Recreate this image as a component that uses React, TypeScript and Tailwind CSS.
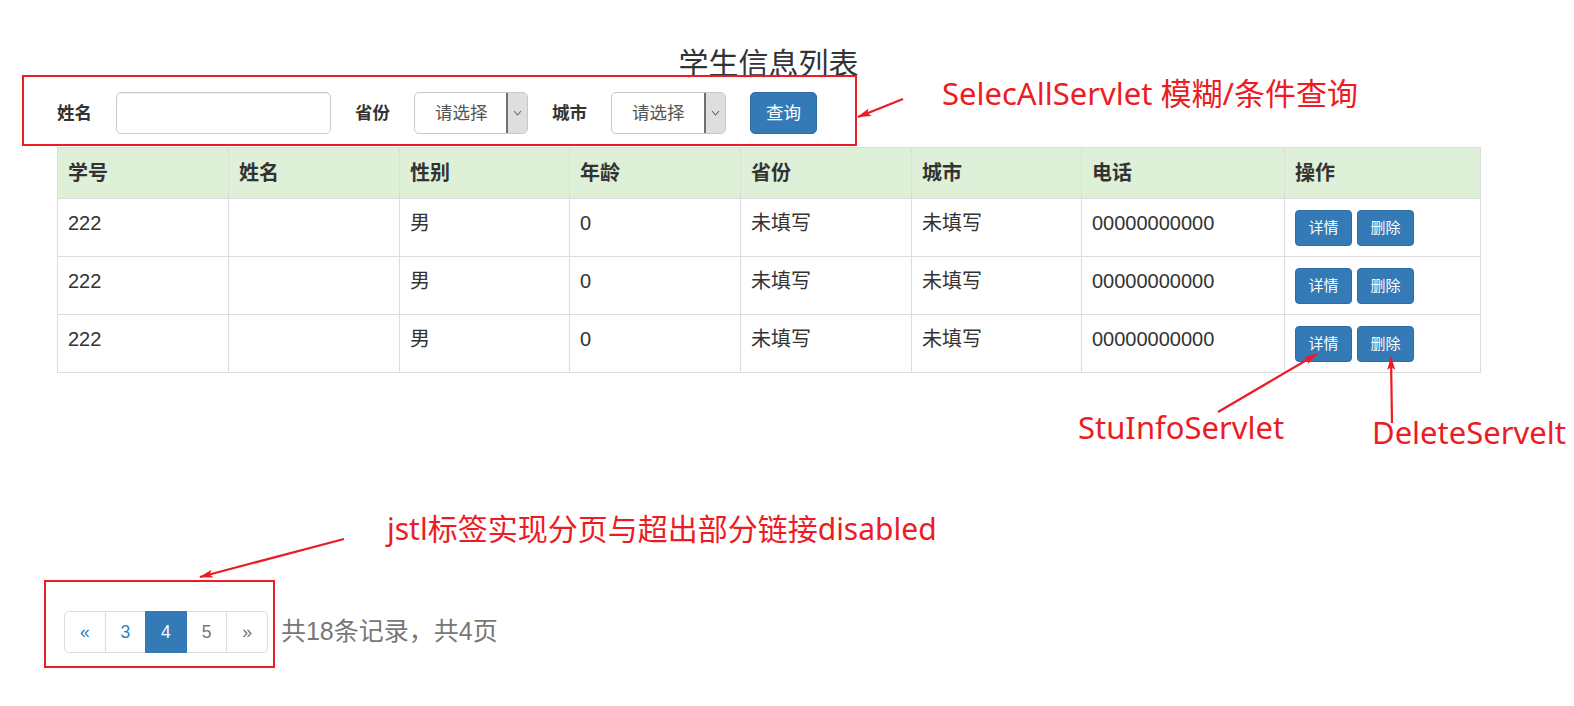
import React from "react";

const headers = ["学号", "姓名", "性别", "年龄", "省份", "城市", "电话", "操作"];
const colWidths = [171, 171, 170, 171, 171, 170, 203, 196];

const rows = [
  { id: "222", name: "", sex: "男", age: "0", province: "未填写", city: "未填写", phone: "00000000000" },
  { id: "222", name: "", sex: "男", age: "0", province: "未填写", city: "未填写", phone: "00000000000" },
  { id: "222", name: "", sex: "男", age: "0", province: "未填写", city: "未填写", phone: "00000000000" },
];

function FakeSelect({ width }: { width: string }) {
  return (
    <div className={`flex h-[42px] ${width} overflow-hidden rounded-[5px] border border-[#c8c8c8] bg-white`}>
      <div className="flex flex-1 items-center pl-[20px] text-[17.5px] text-[#555]">请选择</div>
      <div className="flex w-[21px] items-center justify-center border-l-2 border-[#707070] bg-[#dedede]">
        <svg width="9" height="6" viewBox="0 0 9 6">
          <polyline points="1,1 4.5,5 8,1" fill="none" stroke="#666" strokeWidth="1.1" />
        </svg>
      </div>
    </div>
  );
}

function Pagination() {
  const items = [
    { label: "«", kind: "link" },
    { label: "3", kind: "link" },
    { label: "4", kind: "active" },
    { label: "5", kind: "disabled" },
    { label: "»", kind: "disabled" },
  ];
  return (
    <ul className="flex">
      {items.map((it, i) => (
        <li
          key={i}
          className={
            "flex h-[42px] w-[41.6px] items-center justify-center border text-[17.5px] " +
            (i > 0 ? "-ml-px " : "") +
            (i === 0 ? "rounded-l-[5px] " : "") +
            (i === items.length - 1 ? "rounded-r-[5px] " : "") +
            (it.kind === "active"
              ? "relative z-10 border-[#337ab7] bg-[#337ab7] text-white"
              : it.kind === "disabled"
              ? "border-[#ddd] bg-white text-[#777]"
              : "border-[#ddd] bg-white text-[#337ab7]")
          }
        >
          {it.label}
        </li>
      ))}
    </ul>
  );
}

export default function App() {
  const red = "#ec1c24";
  return (
    <div
      className="relative h-[706px] w-full overflow-hidden bg-white text-[#333]"
      style={{ fontFamily: '"Liberation Sans", "Noto Sans CJK SC", sans-serif' }}
    >
      <div className="ml-[57px] w-[1423px] pt-[47px]">
        <h3 className="text-center text-[30px] font-normal leading-[33px] text-[#333]">学生信息列表</h3>

        {/* search form */}
        <div className="mt-[12px] flex h-[42px] items-center gap-[24px]">
          <label className="text-[17.5px] font-bold">姓名</label>
          <input
            className="h-[42px] w-[215px] rounded-[5px] border border-[#ccc] px-3 shadow-[inset_0_1px_1px_rgba(0,0,0,0.075)] outline-none"
            type="text"
          />
          <label className="text-[17.5px] font-bold">省份</label>
          <FakeSelect width="w-[114px]" />
          <label className="text-[17.5px] font-bold">城市</label>
          <FakeSelect width="w-[115px]" />
          <button className="h-[42px] w-[67px] rounded-[5px] border border-[#2e6da4] bg-[#337ab7] text-[17.5px] text-white">
            查询
          </button>
        </div>

        {/* table */}
        <table className="mt-[13px] w-[1423px] table-fixed border-collapse border border-[#ddd] text-[20px]">
          <colgroup>
            {colWidths.map((w, i) => (
              <col key={i} style={{ width: w }} />
            ))}
          </colgroup>
          <thead>
            <tr className="bg-[#dff0d8]">
              {headers.map((h) => (
                <th key={h} className="border border-[#ddd] px-[10px] py-[10px] text-left font-bold leading-[30px]">
                  {h}
                </th>
              ))}
            </tr>
          </thead>
          <tbody>
            {rows.map((r, i) => (
              <tr key={i}>
                {[r.id, r.name, r.sex, r.age, r.province, r.city, r.phone].map((v, j) => (
                  <td key={j} className="border border-[#ddd] px-[10px] pt-[9px] align-top leading-[30px]">
                    {v}
                  </td>
                ))}
                <td className="border border-[#ddd] px-[10px] pb-[10px] pt-[11px] align-top">
                  <div className="flex gap-[5px]">
                    <button className="h-[36px] w-[57px] rounded-[4px] border border-[#2e6da4] bg-[#337ab7] text-[15px] text-white">
                      详情
                    </button>
                    <button className="h-[36px] w-[57px] rounded-[4px] border border-[#2e6da4] bg-[#337ab7] text-[15px] text-white">
                      删除
                    </button>
                  </div>
                </td>
              </tr>
            ))}
          </tbody>
        </table>

        {/* pagination */}
        <div className="ml-[7px] mt-[238px] flex items-center gap-[13px]">
          <Pagination />
          <span className="text-[25px] text-[#777]">共18条记录，共4页</span>
        </div>
      </div>

      {/* annotations */}
      <div className="pointer-events-none absolute left-[22px] top-[75px] h-[71px] w-[835px] border-2 border-[#ec1c24]" />
      <div className="pointer-events-none absolute left-[44px] top-[580px] h-[88px] w-[231px] border-2 border-[#ec1c24]" />

      <svg className="pointer-events-none absolute left-0 top-0" width="1574" height="706">
        <defs>
          <marker id="ah" markerWidth="14" markerHeight="8" refX="13" refY="4" orient="auto" markerUnits="userSpaceOnUse">
            <path d="M0,0 L14,4 L0,8 L3,4 z" fill={red} />
          </marker>
        </defs>
        <line x1="903" y1="99" x2="858" y2="117" stroke={red} strokeWidth="2.2" markerEnd="url(#ah)" />
        <line x1="1218" y1="412" x2="1317" y2="354" stroke={red} strokeWidth="2.2" markerEnd="url(#ah)" />
        <line x1="1392" y1="423" x2="1391" y2="357" stroke={red} strokeWidth="2.2" markerEnd="url(#ah)" />
        <line x1="344" y1="539" x2="200" y2="577" stroke={red} strokeWidth="2.2" markerEnd="url(#ah)" />
      </svg>

      <div
        className="pointer-events-none absolute left-0 top-0 text-[#ec1c24]"
        style={{ fontFamily: '"Noto Sans", "Noto Sans CJK SC", sans-serif' }}
      >
        <span className="absolute left-[942px] top-[78px] whitespace-nowrap text-[31px] leading-none">
          SelecAllServlet 模糊/条件查询
        </span>
        <span className="absolute left-[1078px] top-[412px] whitespace-nowrap text-[31px] leading-none">StuInfoServlet</span>
        <span className="absolute left-[1372px] top-[417px] whitespace-nowrap text-[31px] leading-none">DeleteServelt</span>
        <span className="absolute left-[387px] top-[514px] whitespace-nowrap text-[30px] leading-none">
          jstl标签实现分页与超出部分链接disabled
        </span>
      </div>
    </div>
  );
}
